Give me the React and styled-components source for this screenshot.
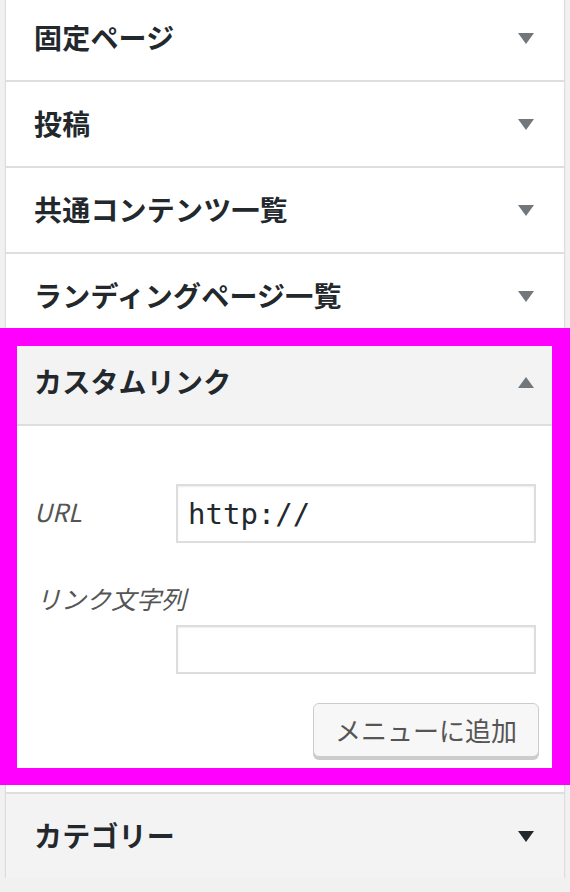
import styled, { createGlobalStyle } from 'styled-components'

const GlobalStyle = createGlobalStyle`
  html, body {
    margin: 0;
    padding: 0;
    background: #f1f1f1;
    overflow: hidden;
  }
  body {
    font-family: "Noto Sans CJK JP", "Noto Sans", sans-serif;
    color: #23282d;
  }
`

const Panel = styled.div`
  margin: -4px 5px 0;
  border-left: 1px solid #ddd;
  border-right: 1px solid #ddd;
  background: #fff;
  box-shadow: 0 2px 2px rgba(0, 0, 0, 0.05);
`

const Section = styled.div`
  position: relative;
  border-bottom: 2px solid #dedede;
  &:last-child {
    border-bottom: none;
  }
`

const Title = styled.div`
  height: 81px;
  display: flex;
  align-items: center;
  justify-content: space-between;
  padding: 0 30px 3px 28px;
  background: ${p => (p.$shaded ? '#f3f3f3' : '#fff')};
  border-bottom: ${p => (p.$open ? '2px solid #dedede' : 'none')};
  font-size: 28px;
  font-weight: 700;
  letter-spacing: 0.2px;

  & svg {
    margin-top: 3px;
  }
`

const Arrow = styled.svg`
  width: 16px;
  height: 11px;
  fill: ${p => (p.$dark ? '#23282d' : '#72777c')};
`

const Body = styled.div`
  padding: 58px 27px 35px 28px;
`

const Row = styled.div`
  display: flex;
  align-items: center;
`

const Label = styled.label`
  width: 142px;
  flex-shrink: 0;
  font-size: 25px;
  font-style: italic;
  color: #555;
  padding-bottom: ${p => (p.$block ? '0' : '6px')};
`

const BlockLabel = styled(Label)`
  display: block;
  width: auto;
  margin: 38px 0 10px 2px;
  line-height: 34px;
`

const Input = styled.input`
  box-sizing: border-box;
  width: 360px;
  height: ${p => p.$h}px;
  border: 2px solid #ddd;
  box-shadow: inset 0 1px 2px rgba(0, 0, 0, 0.07);
  padding: 0 10px;
  font-family: "DejaVu Sans Mono", "Liberation Mono", monospace;
  font-size: 29px;
  color: #23282d;
  background: #fff;
  outline: none;
`

const Indent = styled.div`
  padding-left: 142px;
`

const Actions = styled.div`
  display: flex;
  justify-content: flex-end;
  margin-top: 29px;
`

const Button = styled.button`
  box-sizing: border-box;
  width: 226px;
  height: 54px;
  margin-right: -2px;
  padding: 0 0 2px;
  border: 1px solid #ccc;
  border-radius: 6px;
  background: #f7f7f7;
  box-shadow: 0 3px 0 #ccc;
  font-family: "Noto Sans CJK JP", sans-serif;
  font-size: 26px;
  color: #555;
  cursor: pointer;
`

const Highlight = styled.div`
  position: absolute;
  top: -12px;
  left: -6px;
  right: -6px;
  bottom: 7px;
  border-style: solid;
  border-color: #ff00ff;
  border-width: 18px 18px 17px 17px;
  pointer-events: none;
`

const Down = ({ dark }) => (
  <Arrow viewBox="0 0 16 11" $dark={dark}>
    <path d="M0 0h16L8 11z" />
  </Arrow>
)

const Up = () => (
  <Arrow viewBox="0 0 16 11">
    <path d="M0 11h16L8 0z" />
  </Arrow>
)

const closed = ['固定ページ', '投稿', '共通コンテンツ一覧', 'ランディングページ一覧']

export default function App() {
  return (
    <>
      <GlobalStyle />
      <Panel>
        {closed.map(name => (
          <Section key={name}>
            <Title>
              {name}
              <Down />
            </Title>
          </Section>
        ))}

        <Section>
          <Title $shaded $open>
            カスタムリンク
            <Up />
          </Title>
          <Body>
            <Row>
              <Label>URL</Label>
              <Input $h={59} defaultValue="http://" />
            </Row>
            <BlockLabel $block>リンク文字列</BlockLabel>
            <Indent>
              <Input $h={49} />
            </Indent>
            <Actions>
              <Button>メニューに追加</Button>
            </Actions>
          </Body>
          <Highlight />
        </Section>

        <Section>
          <Title $shaded>
            カテゴリー
            <Down dark />
          </Title>
        </Section>
      </Panel>
    </>
  )
}
